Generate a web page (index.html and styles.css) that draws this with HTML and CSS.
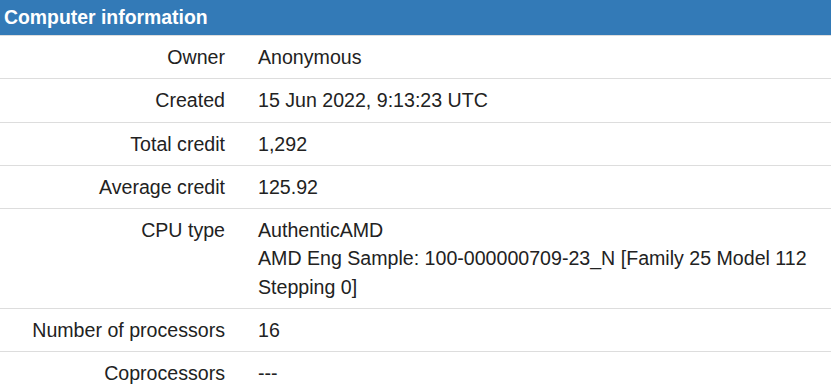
FILE: index.html
```html
<!DOCTYPE html>
<html lang="en">
<head>
    <meta charset="UTF-8">
    <meta name="viewport" content="width=device-width, initial-scale=1.0">
    <title>Computer information</title>
    <link rel="stylesheet" href="styles.css">
</head>
<body>
    <div class="panel">
        <div class="panel-heading">Computer information</div>
        <table class="info-table">
            <tr>
                <td class="label">Owner</td>
                <td>Anonymous</td>
            </tr>
            <tr>
                <td class="label">Created</td>
                <td>15 Jun 2022, 9:13:23 UTC</td>
            </tr>
            <tr>
                <td class="label">Total credit</td>
                <td>1,292</td>
            </tr>
            <tr>
                <td class="label">Average credit</td>
                <td>125.92</td>
            </tr>
            <tr>
                <td class="label">CPU type</td>
                <td>AuthenticAMD <br>AMD Eng Sample: 100-000000709-23_N [Family 25 Model 112 Stepping 0]</td>
            </tr>
            <tr>
                <td class="label">Number of processors</td>
                <td>16</td>
            </tr>
            <tr>
                <td class="label">Coprocessors</td>
                <td>---</td>
            </tr>
        </table>
    </div>
</body>
</html>
```

FILE: styles.css
```css
body {
    margin: 0;
    font-family: "Liberation Sans", Arial, sans-serif;
    color: #222;
    background-color: #fff;
}

.panel {
    width: 831px;
}

.panel-heading {
    background-color: #337ab7;
    color: #fff;
    font-weight: bold;
    font-size: 19.4px;
    line-height: 26px;
    padding: 4px 4px 5px;
    border-bottom: 1px solid #ddd;
}

.info-table {
    width: 100%;
    border-collapse: collapse;
    font-size: 19.6px;
    line-height: 28.25px;
}

.info-table td {
    padding: 7px 17px;
    vertical-align: top;
    border-bottom: 1px solid #ddd;
}

.info-table td.label {
    width: 208px;
    text-align: right;
}

.info-table td:last-child {
    padding-left: 16px;
    padding-right: 10px;
}
```
